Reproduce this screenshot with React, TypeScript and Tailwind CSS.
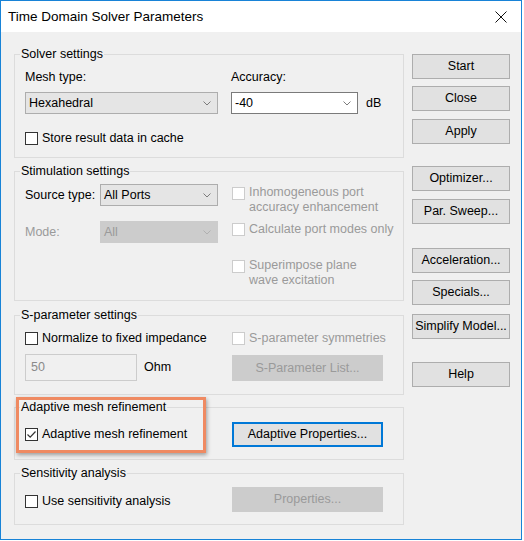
import React from 'react';

const Chevron: React.FC<{ disabled?: boolean }> = ({ disabled }) => (
  <svg width="8" height="5" viewBox="0 0 8 5" className="shrink-0">
    <path d="M0.5 0.5 L4 4 L7.5 0.5" fill="none" stroke={disabled ? '#b0b0b0' : '#7c7c7c'} strokeWidth="1" />
  </svg>
);

const Check: React.FC<{ checked?: boolean; disabled?: boolean }> = ({ checked, disabled }) => (
  <span
    className={
      disabled
        ? 'flex w-[13px] h-[13px] shrink-0 border border-[#cccccc] bg-white'
        : 'flex w-[13px] h-[13px] shrink-0 border border-[#333333] bg-white items-center justify-center'
    }
  >
    {checked && (
      <svg width="11" height="11" viewBox="0 0 11 11">
        <path d="M1.5 5.5 L4.2 8.2 L9.5 2.5" fill="none" stroke="#333333" strokeWidth="1.2" />
      </svg>
    )}
  </span>
);

const Button: React.FC<{ label: string; className?: string; disabled?: boolean; focused?: boolean }> = ({
  label,
  className = '',
  disabled,
  focused,
}) => {
  const base = 'h-[25px] flex items-center justify-center whitespace-nowrap';
  const look = disabled
    ? 'bg-[#cccccc] border border-[#cccccc] text-[#9a9a9a]'
    : focused
      ? 'bg-[#e1e1e1] border-2 border-[#0078d7] text-black'
      : 'bg-[#e1e1e1] border border-[#adadad] text-black';
  return <div className={`${base} ${look} ${className}`}>{label}</div>;
};

const Group: React.FC<{ title: string; className: string; children: React.ReactNode }> = ({ title, className, children }) => (
  <fieldset className={`relative border border-[#dcdcdc] ${className}`}>
    <legend className="ml-[5px] px-[1px] h-[16px] leading-[16px]">{title}</legend>
    {children}
  </fieldset>
);

export default function App() {
  return (
    <div className="w-[524px] h-[541px] bg-white font-['Liberation_Sans',Arial,sans-serif] text-[12.5px] text-black">
      <div className="w-[522px] h-[540px] border border-[#1883d7] bg-[#f0f0f0] flex flex-col">
        {/* title bar */}
        <div className="h-[31px] bg-white flex items-center justify-between pl-[7px] pr-[14px] shrink-0">
          <span className="text-[13.5px] mt-[1px]">Time Domain Solver Parameters</span>
          <svg width="12" height="12" viewBox="0 0 12 12">
            <path d="M0.5 0.5 L11.5 11.5 M11.5 0.5 L0.5 11.5" stroke="#111" strokeWidth="1" />
          </svg>
        </div>

        <div className="flex pl-[13px]">
          {/* left column */}
          <div className="w-[390px] flex flex-col">
            <Group title="Solver settings" className="mt-[14px] h-[112px]">
              <div className="pl-[10px] pt-[7px]">
                <div className="flex">
                  <div className="w-[193px]">
                    <div className="h-[16px] leading-[16px]">Mesh type:</div>
                    <div className="mt-[7px] h-[22px] bg-[#e5e5e5] border border-[#adadad] flex items-center justify-between pl-[3px] pr-[6px]">
                      <span>Hexahedral</span>
                      <Chevron />
                    </div>
                  </div>
                  <div className="ml-[13px]">
                    <div className="h-[16px] leading-[16px]">Accuracy:</div>
                    <div className="mt-[7px] flex items-center">
                      <div className="w-[127px] h-[22px] bg-white border border-[#7a7a7a] flex items-center justify-between pl-[3px] pr-[6px]">
                        <span>-40</span>
                        <Chevron />
                      </div>
                      <span className="ml-[8px]">dB</span>
                    </div>
                  </div>
                </div>
                <div className="mt-[16px] h-[16px] flex items-center gap-[4px]">
                  <Check />
                  <span>Store result data in cache</span>
                </div>
              </div>
            </Group>

            <Group title="Stimulation settings" className="mt-[5px] h-[138px]">
              <div className="pl-[10px] pt-[5px] flex">
                <div className="w-[193px]">
                  <div className="flex items-center h-[22px]">
                    <span className="w-[75px]">Source type:</span>
                    <div className="flex-1 h-[22px] bg-[#e5e5e5] border border-[#adadad] flex items-center justify-between pl-[3px] pr-[6px]">
                      <span>All Ports</span>
                      <Chevron />
                    </div>
                  </div>
                  <div className="flex items-center h-[22px] mt-[15px]">
                    <span className="w-[75px] text-[#9a9a9a]">Mode:</span>
                    <div className="flex-1 h-[22px] bg-[#cccccc] border border-[#cccccc] flex items-center justify-between pl-[3px] pr-[6px] text-[#9a9a9a]">
                      <span>All</span>
                      <Chevron disabled />
                    </div>
                  </div>
                </div>
                <div className="ml-[14px] text-[#9a9a9a] leading-[15px]">
                  <div className="flex gap-[4px] mt-[1px]">
                    <span className="mt-[2px]"><Check disabled /></span>
                    <span>
                      Inhomogeneous port
                      <br />
                      accuracy enhancement
                    </span>
                  </div>
                  <div className="flex gap-[4px] mt-[7px] items-center h-[15px]">
                    <Check disabled />
                    <span>Calculate port modes only</span>
                  </div>
                  <div className="flex gap-[4px] mt-[21px]">
                    <span className="mt-[2px]"><Check disabled /></span>
                    <span>
                      Superimpose plane
                      <br />
                      wave excitation
                    </span>
                  </div>
                </div>
              </div>
            </Group>

            <Group title="S-parameter settings" className="mt-[6px] h-[88px]">
              <div className="pl-[10px] pt-[7px] flex">
                <div className="w-[193px]">
                  <div className="h-[16px] flex items-center gap-[4px]">
                    <Check />
                    <span>Normalize to fixed impedance</span>
                  </div>
                  <div className="mt-[8px] flex items-center">
                    <div className="w-[112px] h-[27px] border border-[#cccccc] bg-[#f0f0f0] text-[#8a8a8a] pl-[5px] pt-[3px]">50</div>
                    <span className="ml-[7px]">Ohm</span>
                  </div>
                </div>
                <div className="ml-[14px]">
                  <div className="h-[16px] flex items-center gap-[4px] text-[#9a9a9a]">
                    <Check disabled />
                    <span>S-parameter symmetries</span>
                  </div>
                  <Button label="S-Parameter List..." disabled className="mt-[9px] w-[151px] h-[26px]" />
                </div>
              </div>
            </Group>

            <Group title="Adaptive mesh refinement" className="mt-[4px] h-[61px]">
              <div className="pl-[10px] pt-[7px] flex items-center h-[32px]">
                <div className="w-[193px] flex items-center gap-[4px]">
                  <Check checked />
                  <span>Adaptive mesh refinement</span>
                </div>
                <Button label="Adaptive Properties..." focused className="ml-[14px] w-[151px]" />
              </div>
              <div className="absolute left-[1px] top-[-18px] w-[190px] h-[56px] border-[3px] border-[#ef8a62] shadow-[1px_2px_4px_rgba(0,0,0,0.35)]" />
            </Group>

            <Group title="Sensitivity analysis" className="mt-[5px] h-[60px]">
              <div className="pl-[10px] pt-[6px] flex items-center h-[31px]">
                <div className="w-[193px] flex items-center gap-[4px] mt-[3px]">
                  <Check />
                  <span>Use sensitivity analysis</span>
                </div>
                <Button label="Properties..." disabled className="ml-[14px] w-[151px]" />
              </div>
            </Group>
          </div>

          {/* right column */}
          <div className="ml-[8px] w-[98px] flex flex-col">
            <Button label="Start" className="mt-[22px]" />
            <Button label="Close" className="mt-[7px]" />
            <Button label="Apply" className="mt-[8px]" />
            <Button label="Optimizer..." className="mt-[22px]" />
            <Button label="Par. Sweep..." className="mt-[8px]" />
            <Button label="Acceleration..." className="mt-[24px]" />
            <Button label="Specials..." className="mt-[7px]" />
            <Button label="Simplify Model..." className="mt-[9px]" />
            <Button label="Help" className="mt-[23px]" />
          </div>
        </div>
      </div>
    </div>
  );
}
